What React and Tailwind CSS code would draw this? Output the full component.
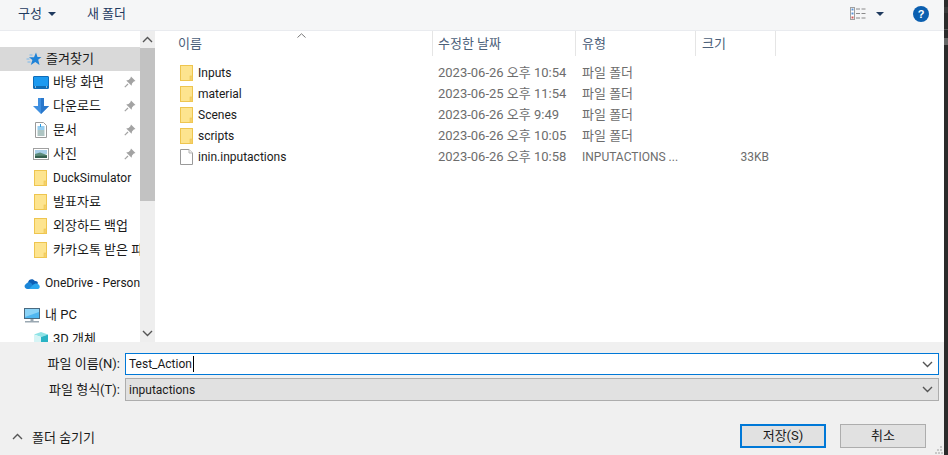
const FONT = "font-['Roboto','Noto_Sans_CJK_KR',sans-serif]"

// korean glyphs sit a little bigger than the latin ones in the dialog
function Ko({ children }) {
  return <span className="text-[13px]">{children}</span>
}

function Folder() {
  return (
    <svg width="13" height="16" viewBox="0 0 13 16" className="shrink-0">
      <rect x="0.5" y="0.5" width="12" height="15" fill="#fde48f" stroke="#eec54f" />
      <rect x="10" y="11" width="2.5" height="4.5" fill="#f6d16b" stroke="#eec54f" strokeWidth="0.6" />
    </svg>
  )
}

function FileIcon() {
  return (
    <svg width="13" height="16" viewBox="0 0 13 16" className="shrink-0">
      <path d="M0.5 0.5H9L12.5 4V15.5H0.5Z" fill="#fff" stroke="#9a9a9a" />
      <path d="M9 0.5V4H12.5" fill="#f0f0f0" stroke="#b5b5b5" />
    </svg>
  )
}

function Pin() {
  return (
    <svg width="12" height="12" viewBox="0 0 12 12" className="shrink-0">
      <path d="M7 0.5L11.5 5L9.8 5.6L8 7.4L7.6 9.8L2.2 4.4L4.6 4L6.4 2.2Z" fill="#a3a3a3" />
      <path d="M4 8L0.8 11.2" stroke="#a3a3a3" strokeWidth="1.2" />
    </svg>
  )
}

function Star() {
  return (
    <svg width="16" height="14" viewBox="0 0 16 14" className="shrink-0">
      <path d="M10 0.5L11.5 5H15.5L12.2 7.8L13.5 13L9.3 10L4.8 13L6.4 8L3 5.2H8Z" fill="#1f83d8" />
      <path d="M0.5 7H3.5M1.5 10H4.5M3.5 3H6.5" stroke="#79b8ec" strokeWidth="1" />
    </svg>
  )
}

function Desktop() {
  return (
    <svg width="16" height="13" viewBox="0 0 16 13" className="shrink-0">
      <rect x="0.5" y="0.5" width="15" height="12" rx="0.5" fill="#1c9af0" stroke="#0e6cb8" />
      <path d="M1 11H15" stroke="#0b5d9f" strokeWidth="1.5" />
      <path d="M2 11H3M13 11H14" stroke="#fff" />
    </svg>
  )
}

function Download() {
  return (
    <svg width="16" height="16" viewBox="0 0 16 16" className="shrink-0">
      <path d="M5 0H11V8H16L8 16L0 8H5Z" fill="#3f8fe0" />
      <path d="M8 0H11V8H16L8 16Z" fill="#2a78cc" />
    </svg>
  )
}

function Doc() {
  return (
    <svg width="12" height="16" viewBox="0 0 12 16" className="shrink-0">
      <path d="M0.5 0.5H8.5L11.5 3.5V15.5H0.5Z" fill="#fff" stroke="#9a9a9a" />
      <path d="M5.5 2V5M2.5 5H9.5M2.5 7H9.5" stroke="#2d9be0" />
      <path d="M2.5 9H9.5M2.5 11H9.5M2.5 13H9.5" stroke="#5f8a86" />
    </svg>
  )
}

function Photo() {
  return (
    <svg width="16" height="12" viewBox="0 0 16 12" className="shrink-0">
      <rect x="0.5" y="0.5" width="15" height="11" fill="#fff" stroke="#a0a0a0" />
      <rect x="2" y="2" width="12" height="4" fill="#a9cfe8" />
      <path d="M2 6L7 4.5L14 7V10H2Z" fill="#5d8d7c" />
      <path d="M2 8L14 7.5V10H2Z" fill="#35604f" />
    </svg>
  )
}

function Cloud() {
  return (
    <svg width="16" height="11" viewBox="0 0 16 11" className="shrink-0">
      <path d="M4 4.5C4.5 1 9 0 10.8 3C13 2.8 14 4 14 5.5L8 8Z" fill="#0f5fb5" />
      <path d="M3.5 11C0.5 11 -0.5 7.5 2 6C3.5 3.8 6.5 3.8 8 6L11 11Z" fill="#1b86d8" />
      <path d="M5 11L9 7C10.5 5.2 13 5 14 6.2C16.2 6.6 16.5 11 13.8 11Z" fill="#2ba6ee" />
    </svg>
  )
}

function Monitor() {
  return (
    <svg width="16" height="15" viewBox="0 0 16 15" className="shrink-0">
      <rect x="0.5" y="0.5" width="15" height="10" fill="#4fb6f0" stroke="#4a6a80" />
      <path d="M1 1H15V4L1 9Z" fill="#8bd3f7" />
      <rect x="6.5" y="11" width="3" height="2" fill="#9aa8b2" />
      <rect x="1" y="13" width="14" height="1.5" fill="#9aa8b2" />
    </svg>
  )
}

function Cube() {
  return (
    <svg width="14" height="15" viewBox="0 0 14 15" className="shrink-0">
      <path d="M7 0L14 2.5L7 5L0 2.5Z" fill="#8fe3e6" />
      <path d="M0 2.5L7 5V15L0 12.5Z" fill="#d5f4f5" />
      <path d="M14 2.5L7 5V15L14 12.5Z" fill="#29b3c4" />
    </svg>
  )
}

function Chevron({ up, className }) {
  return (
    <svg width="11" height="7" viewBox="0 0 11 7" className={className}>
      <path d={up ? 'M1 6L5.5 1.5L10 6' : 'M1 1L5.5 5.5L10 1'} fill="none" stroke="#555" strokeWidth="1.4" />
    </svg>
  )
}

function Caret({ className }) {
  return (
    <svg width="8" height="4" viewBox="0 0 8 4" className={className}>
      <path d="M0 0H8L4 4Z" fill="#1f3a5f" />
    </svg>
  )
}

function SideRow({ icon, label, pinned, indent = true }) {
  return (
    <div className={`flex h-6 items-center whitespace-nowrap ${indent ? 'pl-8' : 'pl-6'}`}>
      <span className={`flex shrink-0 justify-center ${indent ? 'w-[17px]' : 'w-[16px]'}`}>{icon}</span>
      <span className={`${indent ? 'ml-[4px]' : 'ml-[5px]'} w-[68px] grow overflow-hidden text-[#1a1a1a]`}>{label}</span>
      {pinned && <span className="mr-[4px] ml-1 flex"><Pin /></span>}
    </div>
  )
}

const files = [
  { name: 'Inputs', date: '2023-06-26 오후 10:54', type: '파일 폴더', size: '' },
  { name: 'material', date: '2023-06-25 오후 11:54', type: '파일 폴더', size: '' },
  { name: 'Scenes', date: '2023-06-26 오후 9:49', type: '파일 폴더', size: '' },
  { name: 'scripts', date: '2023-06-26 오후 10:05', type: '파일 폴더', size: '' },
  { name: 'inin.inputactions', date: '2023-06-26 오후 10:58', type: 'INPUTACTIONS ...', size: '33KB', file: true },
]

function Sidebar() {
  return (
    <div className="flex w-[157px] shrink-0 overflow-hidden">
      <div className="w-[140px] shrink-0 pt-4">
        <div className="mb-[-1px] flex h-6 items-center bg-[#d9d9d9] pl-[26px] whitespace-nowrap text-[#1a1a1a]">
          <Star />
          <span className="ml-[4px]"><Ko>즐겨찾기</Ko></span>
        </div>
        <SideRow icon={<Desktop />} label={<Ko>바탕 화면</Ko>} pinned />
        <SideRow icon={<Download />} label={<Ko>다운로드</Ko>} pinned />
        <SideRow icon={<Doc />} label={<Ko>문서</Ko>} pinned />
        <SideRow icon={<Photo />} label={<Ko>사진</Ko>} pinned />
        <SideRow icon={<Folder />} label="DuckSimulator" />
        <SideRow icon={<Folder />} label={<Ko>발표자료</Ko>} />
        <SideRow icon={<Folder />} label={<Ko>외장하드 백업</Ko>} />
        <SideRow icon={<Folder />} label={<Ko>카카오톡 받은 파일</Ko>} />
        <div className="h-[9px]" />
        <SideRow icon={<Cloud />} label="OneDrive - Personal" indent={false} />
        <div className="h-2" />
        <SideRow icon={<Monitor />} label={<Ko>내 PC</Ko>} indent={false} />
        <SideRow icon={<Cube />} label={<Ko>3D 개체</Ko>} />
      </div>
      <div className="flex h-full w-[15px] shrink-0 flex-col bg-[#eeeeee]">
        <div className="flex h-[17px] items-center justify-center">
          <Chevron up />
        </div>
        <div className="h-[153px] bg-[#c2c2c2]" />
        <div className="flex grow items-end justify-center pb-[5px]">
          <Chevron />
        </div>
      </div>
    </div>
  )
}

function FileList() {
  return (
    <div className="relative min-w-0 grow">
      <svg width="9" height="5" viewBox="0 0 9 5" className="absolute top-[2px] left-[140px]">
        <path d="M0.5 4.5L4.5 0.8L8.5 4.5" fill="none" stroke="#777" />
      </svg>
      <div className="flex h-[25px] text-[#4c607a]">
        <div className="flex w-[276px] items-center border-r border-[#e5e5e5] pl-[21px]"><Ko>이름</Ko></div>
        <div className="flex w-[143px] items-center border-r border-[#e5e5e5] pl-[5px]"><Ko>수정한 날짜</Ko></div>
        <div className="flex w-[120px] items-center border-r border-[#e5e5e5] pl-[6px]"><Ko>유형</Ko></div>
        <div className="flex w-[80px] items-center border-r border-[#e5e5e5] pl-[6px]"><Ko>크기</Ko></div>
      </div>
      <div className="pt-[6px]">
        {files.map((f) => (
          <div key={f.name} className="flex h-[21px] items-center whitespace-nowrap">
            <div className="flex w-[276px] items-center pl-[23px] text-[#1a1a1a]">
              {f.file ? <FileIcon /> : <Folder />}
              <span className="ml-[5px]">{f.name}</span>
            </div>
            <div className="w-[143px] pl-[5px] text-[13px] text-[#6d6d6d]">{f.date}</div>
            <div className="w-[120px] pl-[6px] text-[#6d6d6d]">{f.file ? f.type : <Ko>{f.type}</Ko>}</div>
            <div className="w-[73px] text-right text-[#6d6d6d]">{f.size}</div>
          </div>
        ))}
      </div>
    </div>
  )
}

export default function App() {
  return (
    <div className={`flex h-[455px] w-[948px] overflow-hidden bg-[#2b2b2b] text-[12px] leading-4 ${FONT}`}>
      <div className="flex w-[944px] shrink-0 flex-col bg-white">
        <div className="flex h-[31px] shrink-0 items-center border-b border-[#e9ebef] bg-[#f5f6f7] pb-[3px] text-[#1f3a5f]">
          <span className="ml-[18px]"><Ko>구성</Ko></span>
          <Caret className="ml-[6px]" />
          <span className="ml-[31px]"><Ko>새 폴더</Ko></span>
          <svg width="16" height="13" viewBox="0 0 16 13" className="ml-auto">
            <rect x="0.5" y="0.5" width="4" height="12" fill="#fff" stroke="#a0a0a0" />
            <rect x="1.5" y="1.5" width="2" height="2" fill="#5a93d6" />
            <rect x="1.5" y="5.5" width="2" height="2" fill="#5a93d6" />
            <rect x="1.5" y="9.5" width="2" height="2" fill="#d05a5a" />
            <path d="M6 2H10M11.5 2H15.5M6 6.5H10M11.5 6.5H15.5M6 11H10M11.5 11H15.5" stroke="#8a8a8a" />
          </svg>
          <Caret className="ml-[10px]" />
          <svg width="16" height="16" viewBox="0 0 16 16" className="mr-[15px] ml-[29px]">
            <circle cx="8" cy="8" r="8" fill="#0b5fb0" />
            <text x="8" y="12" textAnchor="middle" fontSize="11" fontWeight="700" fill="#fff" fontFamily="Liberation Sans, sans-serif">?</text>
          </svg>
        </div>

        <div className="flex h-[311px] shrink-0">
          <Sidebar />
          <FileList />
        </div>

        <div className="relative flex grow flex-col bg-[#f0f0f0] text-[#1a1a1a]">
          <div className="mt-[11px] flex h-[22px] items-center">
            <label className="w-[120px] text-right whitespace-nowrap"><Ko>파일 이름(N):</Ko></label>
            <div className="ml-[5px] flex h-[22px] w-[814px] items-center justify-between border border-[#0078d7] bg-white pr-[5px] pl-[3px]">
              <span className="border-r border-black pr-px">Test_Action</span>
              <Chevron />
            </div>
          </div>
          <div className="mt-[3px] flex h-[23px] items-center">
            <label className="w-[120px] text-right whitespace-nowrap"><Ko>파일 형식(T):</Ko></label>
            <div className="ml-[5px] flex h-[23px] w-[814px] items-center justify-between border border-[#adadad] bg-[#e1e1e1] pr-[5px] pl-[3px]">
              <span>inputactions</span>
              <Chevron />
            </div>
          </div>
          <div className="mt-[23px] flex h-6 items-center">
            <Chevron up className="ml-[12px]" />
            <span className="ml-[9px] pt-[3px]"><Ko>폴더 숨기기</Ko></span>
            <button className="ml-auto h-6 w-[86px] border-2 border-[#0078d7] bg-[#e1e1e1]"><Ko>저장(S)</Ko></button>
            <button className="mr-[18px] ml-[14px] h-6 w-[86px] border border-[#adadad] bg-[#e1e1e1]"><Ko>취소</Ko></button>
          </div>
          <svg width="8" height="8" viewBox="0 0 8 8" className="absolute right-[1px] bottom-[1px]">
            <path d="M5 0H7V2H5ZM2 3H4V5H2ZM5 3H7V5H5ZM0 6H2V8H0ZM3 6H5V8H3ZM6 6H8V8H6Z" fill="#c8c8c8" />
          </svg>
        </div>
      </div>
      <div className="flex grow flex-col">
        <div className="mt-[7px] h-[6px] bg-[#3a3a3a]" />
        <div className="mt-[16px] h-px bg-[#555555]" />
        <div className="mt-[8px] h-[7px] bg-[#666666]" />
      </div>
    </div>
  )
}
